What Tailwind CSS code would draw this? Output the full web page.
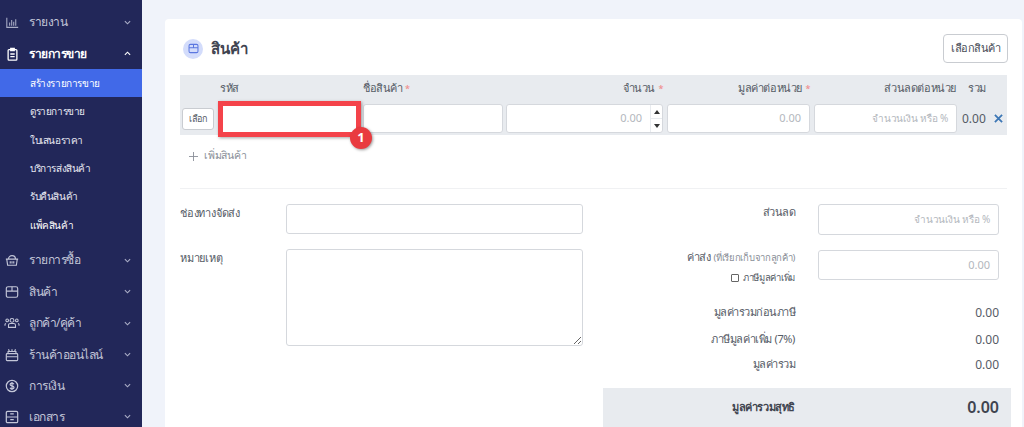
<!DOCTYPE html>
<html lang="th">
<head>
    <title>สร้างรายการขาย</title>
    <script src="https://cdn.jsdelivr.net/npm/@tailwindcss/browser@4"></script>
</head>
<body class="h-[427px] w-[1024px] overflow-hidden bg-[#f0f3fa] font-['Noto_Sans','DejaVu_Sans',sans-serif] text-[#555b66]">
<div class="flex h-[427px]">
    <!-- Sidebar -->
    <aside class="w-[142px] h-[427px] shrink-0 overflow-hidden bg-[#222759] text-[#c3c6d8] text-[12px] tracking-[-0.5px]">
        <div class="flex items-center h-[32px] mt-[6px] pl-[6px] pr-[11px]">
            <svg class="w-[13px] h-[13px] mr-[10px]" viewBox="0 0 16 16" fill="none" stroke="#a9adc6" stroke-width="1.3"><path d="M1 2v12h14M4.500 12V8M7 12V5M9.500 12V7M12 12V4"/></svg>
            <span class="flex-1">รายงาน</span>
            <svg class="w-[7px] h-[7px]" viewBox="0 0 8 8" fill="none" stroke="#a9adc6" stroke-width="1.300"><path d="M1 2.500l3 3 3-3"/></svg>
        </div>
        <div class="flex items-center h-[31px] pl-[6px] pr-[11px] font-bold text-white">
            <svg class="w-[13px] h-[14px] mr-[10px]" viewBox="0 0 14 16" fill="none" stroke="#fff" stroke-width="1.500"><rect x="2" y="3" width="10" height="12" rx="1"/><path d="M5 1.500h4V4H5zM4.500 8h5M4.500 11h5"/></svg>
            <span class="flex-1">รายการขาย</span>
            <svg class="w-[7px] h-[7px]" viewBox="0 0 8 8" fill="none" stroke="#fff" stroke-width="1.300"><path d="M1 5.500l3-3 3 3"/></svg>
        </div>
        <div class="text-[10px] font-medium text-[#e8e9f2] tracking-[-0.4px]">
            <div class="flex items-center h-[28px] pl-[30px] bg-[#4169e8] text-white">สร้างรายการขาย</div>
            <div class="flex items-center h-[29px] pl-[30px]">ดูรายการขาย</div>
            <div class="flex items-center h-[28px] pl-[30px]">ใบเสนอราคา</div>
            <div class="flex items-center h-[28px] pl-[30px]">บริการส่งสินค้า</div>
            <div class="flex items-center h-[29px] pl-[30px]">รับคืนสินค้า</div>
            <div class="flex items-center h-[28px] pl-[30px] text-white">แพ็คสินค้า</div>
        </div>
        <div class="mt-[5px]">
            <div class="flex items-center h-[32px] pl-[5px] pr-[11px]">
                <svg class="w-[14px] h-[14px] mr-[10px]" viewBox="0 0 16 16" fill="none" stroke="#c3c6d8" stroke-width="1.300"><path d="M1 7h14M2 7l1 7h10l1-7M4 7a4 4 0 0 1 8 0M6 9.500v2.500M8 9.500v2.500M10 9.500v2.500"/></svg>
                <span class="flex-1">รายการซื้อ</span>
                <svg class="w-[7px] h-[7px]" viewBox="0 0 8 8" fill="none" stroke="#a9adc6" stroke-width="1.300"><path d="M1 2.500l3 3 3-3"/></svg>
            </div>
            <div class="flex items-center h-[31px] pl-[5px] pr-[11px]">
                <svg class="w-[14px] h-[14px] mr-[10px]" viewBox="0 0 16 16" fill="none" stroke="#c3c6d8" stroke-width="1.300"><rect x="1.500" y="2" width="13" height="12" rx="2"/><path d="M1.500 7h13M8 2v5"/></svg>
                <span class="flex-1">สินค้า</span>
                <svg class="w-[7px] h-[7px]" viewBox="0 0 8 8" fill="none" stroke="#a9adc6" stroke-width="1.300"><path d="M1 2.500l3 3 3-3"/></svg>
            </div>
            <div class="flex items-center h-[32px] pl-[4px] pr-[11px]">
                <svg class="w-[16px] h-[14px] mr-[9px]" viewBox="0 0 18 16" fill="none" stroke="#c3c6d8" stroke-width="1.200"><circle cx="9" cy="5" r="2.200"/><circle cx="3.500" cy="5" r="1.500"/><circle cx="14.500" cy="5" r="1.500"/><path d="M5 13v-2.500a2 2 0 0 1 2-2h4a2 2 0 0 1 2 2V13zM1 11V9.500l1-1M17 11V9.500l-1-1"/></svg>
                <span class="flex-1">ลูกค้า/คู่ค้า</span>
                <svg class="w-[7px] h-[7px]" viewBox="0 0 8 8" fill="none" stroke="#a9adc6" stroke-width="1.300"><path d="M1 2.500l3 3 3-3"/></svg>
            </div>
            <div class="flex items-center h-[31px] pl-[5px] pr-[11px]">
                <svg class="w-[14px] h-[14px] mr-[10px]" viewBox="0 0 16 16" fill="none" stroke="#c3c6d8" stroke-width="1.300"><rect x="1.500" y="6.500" width="13" height="8" rx="1"/><path d="M1.500 10h13M3.500 6.500V4h9v2.500M5 4l-1-2.500M11 4l1-2.500M8 4V1.500"/></svg>
                <span class="flex-1">ร้านค้าออนไลน์</span>
                <svg class="w-[7px] h-[7px]" viewBox="0 0 8 8" fill="none" stroke="#a9adc6" stroke-width="1.300"><path d="M1 2.500l3 3 3-3"/></svg>
            </div>
            <div class="flex items-center h-[31px] pl-[5px] pr-[11px]">
                <svg class="w-[14px] h-[14px] mr-[10px]" viewBox="0 0 16 16" fill="none" stroke="#c3c6d8" stroke-width="1.400"><circle cx="8" cy="8" r="6.500"/><path d="M10.200 6c-.4-1-1.200-1.300-2.200-1.300-1.300 0-2.200.6-2.200 1.600 0 2.300 4.500 1 4.500 3.400 0 1-1 1.600-2.300 1.600-1 0-1.900-.4-2.300-1.300M8 3.500v9"/></svg>
                <span class="flex-1">การเงิน</span>
                <svg class="w-[7px] h-[7px]" viewBox="0 0 8 8" fill="none" stroke="#a9adc6" stroke-width="1.300"><path d="M1 2.500l3 3 3-3"/></svg>
            </div>
            <div class="flex items-center h-[31px] pl-[5px] pr-[11px]">
                <svg class="w-[14px] h-[14px] mr-[10px]" viewBox="0 0 16 16" fill="none" stroke="#c3c6d8" stroke-width="1.400"><rect x="1.500" y="1.500" width="13" height="13" rx="1.500"/><path d="M1.500 8h13M6 4.500h4M6 11h4"/></svg>
                <span class="flex-1">เอกสาร</span>
                <svg class="w-[7px] h-[7px]" viewBox="0 0 8 8" fill="none" stroke="#a9adc6" stroke-width="1.300"><path d="M1 2.500l3 3 3-3"/></svg>
            </div>
        </div>
    </aside>

    <!-- Main -->
    <main class="flex-1 min-w-0 pt-[19px] pl-[23px] pr-[2px]">
        <div class="h-[408px] bg-white rounded-t-[4px] pl-[15px] pr-[15px] overflow-hidden">
            <!-- Title -->
            <div class="flex items-center justify-between h-[56px] pt-[3px]">
                <div class="flex items-center">
                    <div class="w-[20px] h-[20px] ml-[3px] mr-[8px] rounded-full bg-[#d3dcfb] flex items-center justify-center">
                        <svg class="w-[11px] h-[11px]" viewBox="0 0 16 16" fill="none" stroke="#5b77e0" stroke-width="1.500"><rect x="1.500" y="2" width="13" height="12" rx="2"/><path d="M1.500 7h13M8 2v5"/></svg>
                    </div>
                    <span class="text-[15px] font-semibold text-[#3f4450]">สินค้า</span>
                </div>
                <button class="w-[65px] h-[29px] mr-[-1px] border border-[#c9ccd1] rounded-[4px] text-[11px] tracking-[-0.5px] text-[#474c57]">เลือกสินค้า</button>
            </div>

            <!-- Product table -->
            <div class="h-[27px] bg-[#e8ebef] flex items-center text-[11px] tracking-[-0.4px] font-medium text-[#555b66]">
                <span class="ml-[40px] w-[143px]">รหัส</span>
                <span class="w-[190px]">ชื่อสินค้า <span class="text-[9px] text-[#f08a8a]">*</span></span>
                <span class="w-[110px] text-right">จำนวน <span class="ml-[1px] text-[9px] text-[#f08a8a]">*</span></span>
                <span class="w-[147px] text-right">มูลค่าต่อหน่วย <span class="ml-[1px] text-[9px] text-[#f08a8a]">*</span></span>
                <span class="w-[146px] text-right">ส่วนลดต่อหน่วย</span>
                <span class="ml-[12px]">รวม</span>
            </div>
            <div class="h-[33px] bg-[#e8ebef] flex items-center pl-[2px] relative">
                <button class="w-[32px] h-[22px] shrink-0 bg-white border border-[#c9ccd1] rounded-[3px] text-[9px] tracking-[-0.2px] text-[#555b66]">เลือก</button>
                <input class="w-[141px] h-[29px] ml-[5px] shrink-0 bg-white">
                <input class="w-[140px] h-[29px] ml-[3px] shrink-0 bg-white border border-[#d5d8dd] rounded-[3px]">
                <div class="w-[157px] h-[29px] ml-[3px] shrink-0 bg-white border border-[#d5d8dd] rounded-[3px] flex justify-end items-stretch text-[11px] text-[#b3b7bd]">
                    <span class="flex-1 self-center text-right pr-[8px]">0.00</span>
                    <div class="w-[12px] border-l border-[#e8ebef] flex flex-col">
                        <div class="flex-1 flex items-center justify-center border-b border-[#e8ebef]"><div class="border-x-[3px] border-x-transparent border-b-[4px] border-b-[#333]"></div></div>
                        <div class="flex-1 flex items-center justify-center"><div class="border-x-[3px] border-x-transparent border-t-[4px] border-t-[#333]"></div></div>
                    </div>
                </div>
                <div class="w-[143px] h-[29px] ml-[4px] shrink-0 bg-white border border-[#d5d8dd] rounded-[3px] flex items-center justify-end pr-[8px] text-[11px] text-[#b3b7bd]">0.00</div>
                <div class="w-[143px] h-[29px] ml-[4px] shrink-0 bg-white border border-[#d5d8dd] rounded-[3px] flex items-center justify-end pr-[8px] text-[10px] tracking-[-0.2px] text-[#b3b7bd]">จำนวนเงิน หรือ %</div>
                <span class="ml-[5px] text-[12px]">0.00</span>
                <svg class="ml-[8px] w-[9px] h-[9px]" viewBox="0 0 10 10" fill="none" stroke="#3d77b5" stroke-width="2"><path d="M1 1l8 8M9 1l-8 8"/></svg>
                <!-- Tutorial annotation -->
                <div class="absolute left-[38px] -top-[1px] w-[143px] h-[36px] border-[5px] border-[#f4434a] shadow-[1px_1px_3px_rgba(0,0,0,.35)]"></div>
                <div class="absolute left-[170px] top-[25px] w-[22px] h-[22px] rounded-full bg-[#e93b40] shadow-[1px_1px_3px_rgba(0,0,0,.4)] text-white text-[13px] font-bold flex items-center justify-center">1</div>
            </div>
            <div class="flex items-center h-[42px] pl-[9px] text-[10.500px] tracking-[-0.2px] text-[#8a8f98]">
                <svg class="w-[9px] h-[9px] mr-[6px]" viewBox="0 0 10 10" stroke="#8a8f98" stroke-width="1"><path d="M5 0v10M0 5h10"/></svg>
                เพิ่มสินค้า
            </div>
            <div class="h-px bg-[#f0f1f3] mt-[11px]"></div>

            <!-- Form -->
            <div class="flex mt-[15px]">
                <div class="w-[403px] h-[142px] shrink-0 grid grid-cols-[106px_297px] content-start gap-y-[15px] text-[11px] tracking-[-0.2px] font-medium">
                    <label class="pt-[1px]">ช่องทางจัดส่ง</label>
                    <input class="h-[30px] border border-[#d5d8dd] rounded-[3px]">
                    <label class="pt-[1px]">หมายเหตุ</label>
                    <textarea class="h-[97px] border border-[#d5d8dd] rounded-[3px] resize-y"></textarea>
                </div>
                <div class="w-[408px] ml-[20px] shrink-0 text-[11px]">
                    <div class="flex justify-between pr-[12px]">
                        <div class="w-[192px] text-right font-medium tracking-[-0.5px]">ส่วนลด</div>
                        <div class="w-[181px] h-[31px] border border-[#d5d8dd] rounded-[3px] flex items-center justify-end pr-[8px] text-[10px] tracking-[-0.2px] text-[#b3b7bd]">จำนวนเงิน หรือ %</div>
                    </div>
                    <div class="flex justify-between pr-[12px] mt-[15px]">
                        <div class="w-[192px] text-right tracking-[-0.3px]">
                            <div class="-mt-[1px]"><span class="font-medium">ค่าส่ง</span> <span class="text-[9.500px] text-[#8a8f98]">(ที่เรียกเก็บจากลูกค้า)</span></div>
                            <div class="flex items-center justify-end mt-[5px] text-[9.500px] font-medium"><span class="w-[8px] h-[8px] mr-[4px] border border-[#666] rounded-[1px]"></span>ภาษีมูลค่าเพิ่ม</div>
                        </div>
                        <div class="w-[181px] h-[30px] border border-[#d5d8dd] rounded-[3px] flex items-center justify-end pr-[8px] text-[#b3b7bd]">0.00</div>
                    </div>
                    <div class="flex justify-between pr-[12px] mt-[19px] h-[27px]"><div class="w-[192px] text-right tracking-[-0.5px]">มูลค่ารวมก่อนภาษี</div><div class="text-[12px]">0.00</div></div>
                    <div class="flex justify-between pr-[12px] h-[25px]"><div class="w-[192px] text-right tracking-[-0.4px]">ภาษีมูลค่าเพิ่ม (7%)</div><div class="text-[12px]">0.00</div></div>
                    <div class="flex justify-between pr-[12px] h-[24px]"><div class="w-[192px] text-right tracking-[-0.5px]">มูลค่ารวม</div><div class="text-[12px]">0.00</div></div>
                    <div class="flex justify-between items-center pr-[12px] h-[39px] mt-[8px] bg-[#e8ebef]">
                        <div class="w-[192px] text-right font-semibold tracking-[-0.4px] text-[#3f4450]">มูลค่ารวมสุทธิ</div>
                        <div class="text-[16px] font-semibold text-[#3f4450]">0.00</div>
                    </div>
                </div>
            </div>
        </div>
    </main>
</div>
</body>
</html>
